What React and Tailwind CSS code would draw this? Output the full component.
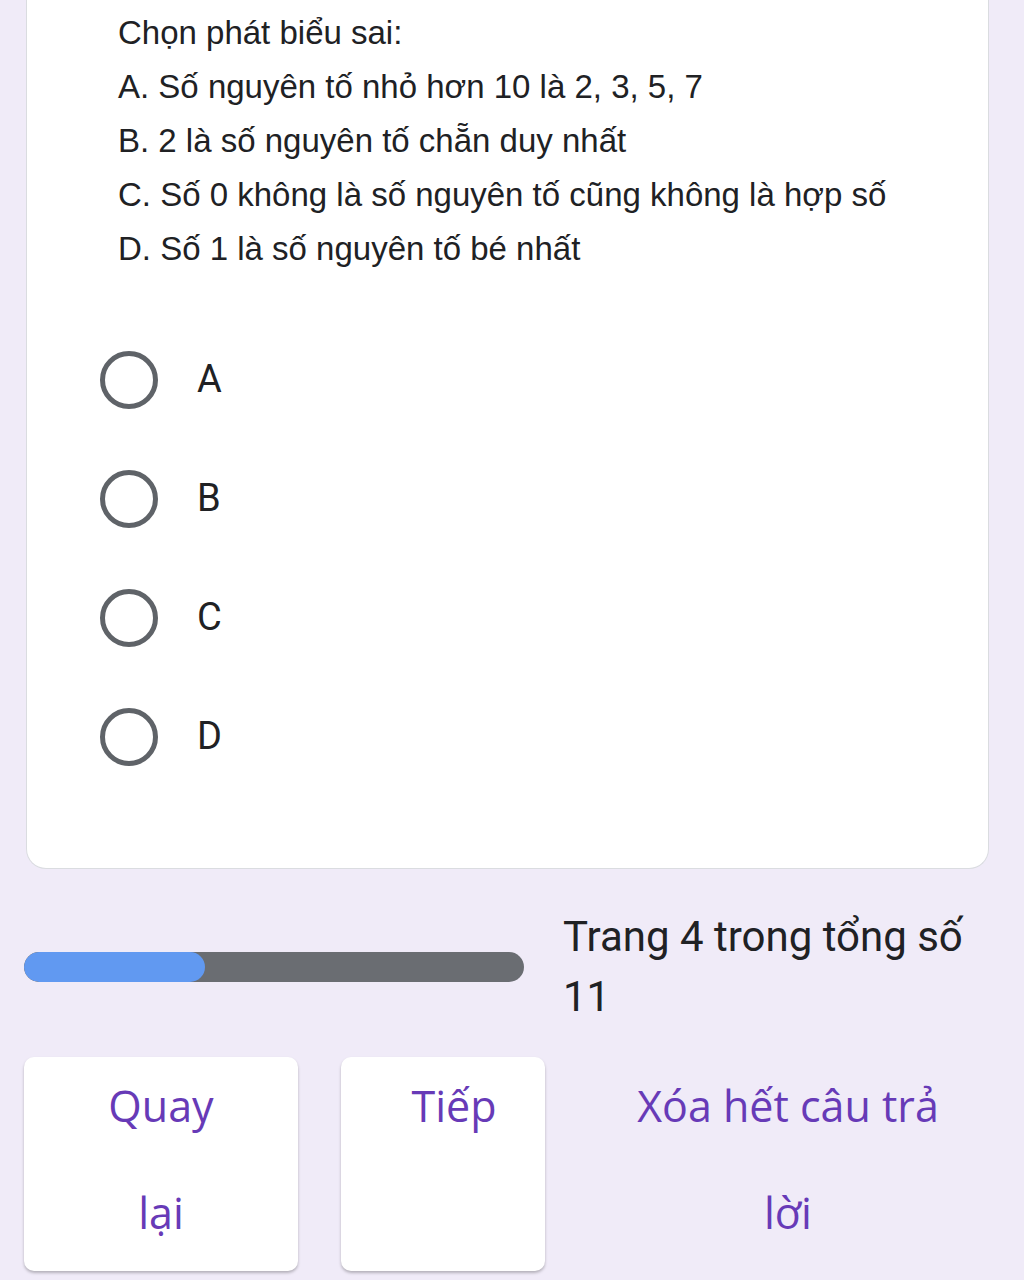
import React from "react";

const options = ["A", "B", "C", "D"];

function Radio({ label }) {
  return (
    <div className="flex items-center h-[119px]">
      <div className="w-[58px] h-[58px] rounded-full border-[5px] border-[#5f6368] shrink-0"></div>
      <span className="ml-[39px] text-[38px] text-[#202124] font-['Roboto',sans-serif]">{label}</span>
    </div>
  );
}

const App = () => {
  return (
    <div className="min-h-[1280px] bg-[#f0ebf8] overflow-hidden">
      <div className="ml-[26px] w-[963px] bg-white rounded-b-[20px] border border-t-0 border-[#dadce0] pb-[72px]">
        <div className="pl-[91px] pt-[6px] text-[33px] leading-[54px] text-[#202124] font-['Liberation_Sans',Arial,sans-serif]">
          <div>Chọn phát biểu sai:</div>
          <div>A. Số nguyên tố nhỏ hơn 10 là 2, 3, 5, 7</div>
          <div>B. 2 là số nguyên tố chẵn duy nhất</div>
          <div>C. Số 0 không là số nguyên tố cũng không là hợp số</div>
          <div>D. Số 1 là số nguyên tố bé nhất</div>
        </div>
        <div className="pl-[73px] mt-[44px]">
          {options.map((o) => (
            <Radio key={o} label={o} />
          ))}
        </div>
      </div>

      <div className="flex items-center mt-[38px] pl-[24px]">
        <div className="w-[500px] h-[30px] rounded-full bg-[#6a6d72] overflow-hidden">
          <div className="w-[181px] h-full rounded-full bg-[#6199f1]"></div>
        </div>
        <div className="ml-[39px] text-[42px] leading-[60px] text-[#202124] font-['Roboto',sans-serif]">
          Trang 4 trong tổng số
          <br />
          11
        </div>
      </div>

      <div className="flex items-start mt-[30px] pl-[24px] text-[43px] leading-[107px] text-[#673ab7] font-medium font-['Open_Sans',sans-serif]">
        <div className="w-[274px] h-[214px] bg-white rounded-[10px] shadow-[0_2px_3px_rgba(0,0,0,0.25)] text-center">
          <div className="-mt-[5px]">
            Quay
            <br />
            lại
          </div>
        </div>
        <div className="ml-[43px] w-[204px] h-[214px] pl-[22px] bg-white rounded-[10px] shadow-[0_2px_3px_rgba(0,0,0,0.25)] text-center">
          <div className="-mt-[5px]">Tiếp</div>
        </div>
        <div className="ml-[40px] w-[406px] h-[214px] text-center">
          <div className="-mt-[5px]">
            Xóa hết câu trả
            <br />
            lời
          </div>
        </div>
      </div>
    </div>
  );
};

export default App;
